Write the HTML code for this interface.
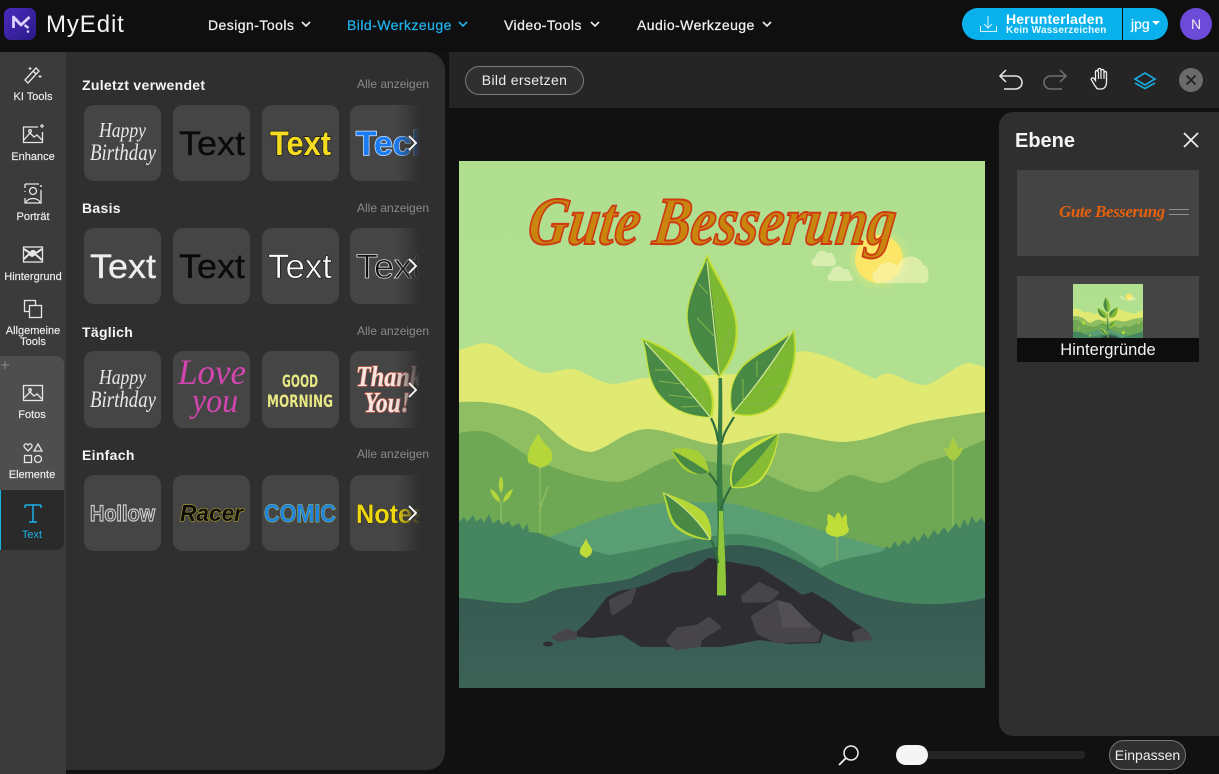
<!DOCTYPE html>
<html lang="de"><head><meta charset="utf-8"><title>MyEdit</title>
<style>
*{box-sizing:border-box}
html,body{margin:0;padding:0;width:1219px;height:774px;overflow:hidden;background:#111;font-family:"Liberation Sans",sans-serif;color:#fff}
.a{position:absolute}
.nav{position:absolute;top:16px;font-size:14px;line-height:18px;letter-spacing:.45px;color:#f0f0f0;font-weight:400;white-space:nowrap;-webkit-text-stroke:.25px #f0f0f0}
.side{position:absolute;width:66px;left:0;text-align:center;font-size:11px;line-height:11px;color:#eee;white-space:nowrap;-webkit-text-stroke:.15px #eee}
.h{position:absolute;left:82px;font-size:14px;line-height:16px;letter-spacing:.3px;font-weight:700;color:#f5f5f5;white-space:nowrap}
.all{position:absolute;left:357px;font-size:12px;line-height:14px;color:#8a8a8a;white-space:nowrap}
.tile{position:absolute;width:77px;height:76px;background:#454545;border-radius:10px}
.fade{position:absolute;left:396px;width:36px;height:78px;background:linear-gradient(90deg,rgba(47,47,47,0),#2f2f2f 68%)}
</style></head><body>

<div class="a" style="left:0;top:0;width:1219px;height:52px;background:#0f0f0f"></div>

<svg class="a" style="left:4px;top:8px" width="32" height="32" viewBox="0 0 32 32"><defs><linearGradient id="lg" x1="0" y1="0" x2="1" y2="1"><stop offset="0" stop-color="#4a2bc0"/><stop offset="1" stop-color="#2a1a86"/></linearGradient></defs><rect width="32" height="32" rx="7" fill="url(#lg)"/><path d="M9.500 20V9l7.500 8 8.500-8" fill="none" stroke="#dcd2ff" stroke-width="2.800" stroke-linejoin="round"/><path d="M20.500 17l4 3" stroke="#dcd2ff" stroke-width="2.400" fill="none"/><circle cx="24" cy="23.500" r="1.300" fill="#dcd2ff"/></svg>
<div class="a" style="left:46px;top:11px;font-size:24px;line-height:28px;letter-spacing:.9px;color:#f2f2f2">MyEdit</div>

<div class="nav" style="left:208px">Design-Tools</div>
<div class="nav" style="left:347px;color:#1fb0ea;-webkit-text-stroke:.25px #1fb0ea">Bild-Werkzeuge</div>
<div class="nav" style="left:504px">Video-Tools</div>
<div class="nav" style="left:637px">Audio-Werkzeuge</div>
<svg class="a" style="left:0;top:0" width="800" height="52" fill="none" stroke-width="1.600"><path d="M302 22l4 4 4-4" stroke="#eee"/><path d="M459 22l4 4 4-4" stroke="#1fb0ea"/><path d="M591 22l4 4 4-4" stroke="#eee"/><path d="M763 22l4 4 4-4" stroke="#eee"/></svg>

<div class="a" style="left:962px;top:8px;width:160px;height:32px;background:#08b1ec;border-radius:16px 0 0 16px"></div>
<div class="a" style="left:1123px;top:8px;width:45px;height:32px;background:#08b1ec;border-radius:0 16px 16px 0"></div>
<svg class="a" style="left:979px;top:15px" width="20" height="20" fill="none" stroke="#d6f3ff" stroke-width="1"><path d="M9 1v12M5 9l4 4 4-4M1.500 11v5.500h16V11"/></svg>
<div class="a" style="left:1006px;top:12px;font-size:14px;line-height:14px;font-weight:700;letter-spacing:.2px;color:#fff">Herunterladen</div>
<div class="a" style="left:1006px;top:25px;font-size:10px;line-height:12px;font-weight:700;letter-spacing:.24px;color:#e8f8ff">Kein Wasserzeichen</div>
<div class="a" style="left:1131px;top:16px;font-size:14px;line-height:16px;color:#fff;-webkit-text-stroke:.2px #fff">jpg</div>
<svg class="a" style="left:1152px;top:21px" width="9" height="6"><path d="M0 0h8L4 4z" fill="#fff"/></svg>
<div class="a" style="left:1180px;top:8px;width:32px;height:32px;border-radius:50%;background:#6b4bd8;text-align:center;font-size:14px;line-height:32px;color:#eee">N</div>

<div class="a" style="left:0;top:52px;width:66px;height:722px;background:#3b3b3b"></div>
<div class="a" style="left:66px;top:52px;width:379px;height:718px;background:#2f2f2f;border-radius:0 18px 18px 0"></div>
<div class="a" style="left:0;top:356px;width:64px;height:134px;background:#4e4e4e;border-radius:0 8px 0 0"></div>
<div class="a" style="left:0;top:490px;width:64px;height:60px;background:#2a2a2a;border-radius:0 0 8px 0;border-left:1px solid #1ab1e6"></div>
<svg class="a" style="left:0;top:358px" width="10" height="14" stroke="#8a8a8a" stroke-width="1"><path d="M1 7h8M5 3v8"/></svg>

<svg class="a" style="left:0;top:55px" width="66" height="500" fill="none" stroke="#e6e6e6" stroke-width="1.300">
<path d="M25 25l11-12 3 3-11 12zM33 16l3 3"/><path d="M30 12v3M28.500 13.500h3M40 20v3M38.500 21.500h3" stroke-width="1"/>
<path d="M38 72H23.500v15.500h19V77"/><path d="M24 85l6-7 4 4 3-2 5 5" /><circle cx="30" cy="76" r="1.300"/><path d="M40 71h4M42 69v4" stroke-width="1.200"/>
<path d="M25 129h14M25 129v4M25 137v-1M41 135v13H25v-5"/><circle cx="33" cy="136" r="3.500"/><path d="M26 148c1-6 13-6 14 0"/><circle cx="41" cy="131" r="1" fill="#e6e6e6" stroke="none"/>
<rect x="23.500" y="192" width="19" height="15"/><path d="M24 204l5-5 3 2 3-2 7 6M24 194l6 4M42 194l-6 4" stroke-width="2"/><circle cx="33" cy="198" r="2.500" fill="#e6e6e6"/>
<rect x="24.500" y="245.500" width="11" height="11"/><rect x="29.500" y="250.500" width="12" height="12" fill="#3b3b3b" />
</svg>
<svg class="a" style="left:0;top:380px" width="66" height="160" fill="none" stroke="#e6e6e6" stroke-width="1.300">
<rect x="23.500" y="5.500" width="19" height="15"/><path d="M24 18l6-6 4 4 3-2 5 5"/><circle cx="30" cy="10" r="1.300"/>
<path d="M28 71l-3.500-3.500c-2-3 2-5 3.500-2.500 1.500-2.500 5.500-.5 3.500 2.500z"/><path d="M38 64l4 7h-8z"/><rect x="24.500" y="75.500" width="7" height="7"/><circle cx="38" cy="79" r="3.500"/>
<path d="M25 125h16M33 125v17M29 142h8M25 128v-3M41 128v-3" stroke="#1ab1e6" stroke-width="1.500"/>
</svg>

<div class="side" style="top:92px">KI Tools</div>
<div class="side" style="top:152px">Enhance</div>
<div class="side" style="top:212px">Porträt</div>
<div class="side" style="top:272px">Hintergrund</div>
<div class="side" style="top:326px">Allgemeine</div>
<div class="side" style="top:337px">Tools</div>
<div class="side" style="top:410px;width:64px">Fotos</div>
<div class="side" style="top:470px;width:64px">Elemente</div>
<div class="side" style="top:530px;width:64px;color:#1ab1e6;-webkit-text-stroke:0">Text</div>

<div class="h" style="top:77px">Zuletzt verwendet</div><div class="all" style="top:77px">Alle anzeigen</div>
<div class="h" style="top:200px">Basis</div><div class="all" style="top:201px">Alle anzeigen</div>
<div class="h" style="top:324px">Täglich</div><div class="all" style="top:324px">Alle anzeigen</div>
<div class="h" style="top:447px">Einfach</div><div class="all" style="top:447px">Alle anzeigen</div>

<div class="tile" style="left:84px;top:105px"></div><div class="tile" style="left:173px;top:105px"></div><div class="tile" style="left:262px;top:105px"></div><div class="tile" style="left:350px;top:105px"></div>
<div class="tile" style="left:84px;top:228px"></div><div class="tile" style="left:173px;top:228px"></div><div class="tile" style="left:262px;top:228px"></div><div class="tile" style="left:350px;top:228px"></div>
<div class="tile" style="left:84px;top:351px;height:77px"></div><div class="tile" style="left:173px;top:351px;height:77px"></div><div class="tile" style="left:262px;top:351px;height:77px"></div><div class="tile" style="left:350px;top:351px;height:77px"></div>
<div class="tile" style="left:84px;top:475px"></div><div class="tile" style="left:173px;top:475px"></div><div class="tile" style="left:262px;top:475px"></div><div class="tile" style="left:350px;top:475px"></div>

<svg class="a" style="left:0;top:0" width="445" height="774" font-family="'Liberation Sans',sans-serif">
<defs><clipPath id="cl"><rect x="340" y="90" width="80" height="480"/></clipPath></defs>
<g font-family="'Liberation Serif',serif" font-style="italic" fill="#e8e8e8">
<text x="99" y="137" font-size="21" textLength="47" lengthAdjust="spacingAndGlyphs">Happy</text>
<text x="90" y="160" font-size="23" textLength="66" lengthAdjust="spacingAndGlyphs">Birthday</text>
<text x="99" y="384" font-size="21" textLength="47" lengthAdjust="spacingAndGlyphs">Happy</text>
<text x="90" y="407" font-size="23" textLength="66" lengthAdjust="spacingAndGlyphs">Birthday</text>
<text x="178" y="384" font-size="36" fill="#d445b0" textLength="68" lengthAdjust="spacingAndGlyphs">Love</text>
<text x="192" y="412" font-size="34" fill="#d445b0" textLength="46" lengthAdjust="spacingAndGlyphs">you</text>
</g>
<g font-size="34">
<text x="179" y="155" fill="#0a0a0a" stroke="#0a0a0a" stroke-width=".3" textLength="66" lengthAdjust="spacingAndGlyphs">Text</text>
<text x="270" y="155" fill="#f5dc20" stroke="#1a1a1a" stroke-width="1.500" font-weight="700" paint-order="stroke" textLength="61" lengthAdjust="spacingAndGlyphs">Text</text>
<text x="90" y="278" fill="#eee" stroke="#eee" stroke-width=".3" textLength="66" lengthAdjust="spacingAndGlyphs">Text</text>
<text x="179" y="278" fill="#0a0a0a" stroke="#0a0a0a" stroke-width=".3" textLength="66" lengthAdjust="spacingAndGlyphs">Text</text>
<text x="268" y="278" fill="#fff" stroke="#111" stroke-width=".6" textLength="64" lengthAdjust="spacingAndGlyphs">Text</text>
</g>
<g font-size="34" clip-path="url(#cl)">
<text x="356" y="155" fill="#1a7cf0" stroke="#cfe6ff" stroke-width="1.500" font-weight="700" paint-order="stroke" textLength="76" lengthAdjust="spacingAndGlyphs">Tech</text>
<text x="356" y="278" fill="#111" stroke="#ddd" stroke-width=".8" textLength="66" lengthAdjust="spacingAndGlyphs">Text</text>
<text x="356" y="386" font-family="'Liberation Serif',serif" font-style="italic" font-weight="700" font-size="29" fill="#f6e6e0" stroke="#c9604f" stroke-width="1.500" paint-order="stroke" textLength="66" lengthAdjust="spacingAndGlyphs">Thank</text>
<text x="364" y="412" font-family="'Liberation Serif',serif" font-style="italic" font-weight="700" font-size="28" fill="#f6e6e0" stroke="#c9604f" stroke-width="1.500" paint-order="stroke" textLength="46" lengthAdjust="spacingAndGlyphs">You!</text>
<text x="356" y="523" fill="#f0d810" stroke="#222" stroke-width="1" font-size="27" font-weight="700" paint-order="stroke" textLength="70" lengthAdjust="spacingAndGlyphs">Notes</text>
</g>
<g font-family="'DejaVu Sans',sans-serif" font-size="17" fill="#e8e884" font-weight="700">
<text x="282" y="387" textLength="36" lengthAdjust="spacingAndGlyphs">GOOD</text>
<text x="267" y="407" textLength="66" lengthAdjust="spacingAndGlyphs">MORNING</text>
</g>
<text x="90" y="521" font-size="22" font-weight="700" fill="#444" stroke="#cfcfcf" stroke-width="1.200" textLength="65" lengthAdjust="spacingAndGlyphs">Hollow</text>
<text x="180" y="521" font-size="23" font-weight="700" font-style="italic" fill="#0c0c0c" stroke="#c5b820" stroke-width="1" paint-order="stroke" textLength="63" lengthAdjust="spacingAndGlyphs">Racer</text>
<text x="264" y="522" font-size="25" font-weight="700" fill="#1b84e0" stroke="#c0d060" stroke-width=".8" paint-order="stroke" textLength="72" lengthAdjust="spacingAndGlyphs">COMIC</text>
</svg>

<div class="fade" style="top:104px"></div><div class="fade" style="top:227px"></div><div class="fade" style="top:350px;height:79px"></div><div class="fade" style="top:474px"></div>
<svg class="a" style="left:0;top:0" width="445" height="600" fill="none" stroke="#fff" stroke-width="1.800"><path d="M409 136l7 7-7 7M409 259l7 7-7 7M409 383l7 7-7 7M409 506l7 7-7 7"/></svg>

<div class="a" style="left:449px;top:52px;width:770px;height:56px;background:#252525"></div>
<div class="a" style="left:465px;top:66px;width:119px;height:29px;border:1px solid #7a7a7a;border-radius:15px;background:#303030;text-align:center;font-size:14px;line-height:27px;letter-spacing:.35px;color:#eee">Bild ersetzen</div>
<svg class="a" style="left:0;top:0" width="1219" height="108" fill="none">
<path d="M1006 70l-6 6 6 6M1000 76h15c4.500 0 7 3 7 6.500s-2.500 6.500-7 6.500h-11" stroke="#e8e8e8" stroke-width="1.500"/>
<path d="M1060 70l6 6-6 6M1066 76h-15c-4.500 0-7 3-7 6.500s2.500 6.500 7 6.500h11" stroke="#707070" stroke-width="1.500"/>
<path d="M1096 87c-2-2-3-5-4.500-7-1-1.500 1-3 2.500-1.500l1.500 2V72c0-2 2.500-2 2.500 0v-2c0-2 3-2 3 0v1c0-2 3-2 3 0v2c0-2 2.500-2 2.500 0v9c0 4-2 7-5.500 7h-2c-1.500 0-2.500-.5-3-2z" stroke="#f0f0f0" stroke-width="1.300"/><path d="M1098.500 72v7M1101 71v8M1104 73v6" stroke="#f0f0f0" stroke-width="1.200"/>
<path d="M1145 73l10 6-10 6-10-6zM1135 83l10 5.500 10-5.500" stroke="#1aa6dc" stroke-width="1.700"/>
<circle cx="1191" cy="80" r="12" fill="#6b6b6b"/><path d="M1186.500 75.500l9 9M1195.500 75.500l-9 9" stroke="#222" stroke-width="1.800"/>
</svg>

<svg class="a" style="left:459px;top:161px" width="526" height="527" viewBox="0 0 526 527">
<defs>
<linearGradient id="sk" x1="0" y1="0" x2="0" y2="1"><stop offset="0" stop-color="#afdf8f"/><stop offset="1" stop-color="#b2e191"/></linearGradient>
<linearGradient id="gnd" x1="0" y1="0" x2="0" y2="1"><stop offset="0" stop-color="#33574f"/><stop offset="1" stop-color="#3d6257"/></linearGradient>
<radialGradient id="sunglow"><stop offset="0" stop-color="#fff27a" stop-opacity=".5"/><stop offset=".75" stop-color="#f5ec78" stop-opacity=".3"/><stop offset="1" stop-color="#e8ea80" stop-opacity="0"/></radialGradient>
<g id="scene">
<rect width="526" height="527" fill="url(#sk)"/>
<circle cx="420" cy="98" r="33" fill="url(#sunglow)"/>
<circle cx="420" cy="98" r="24" fill="#fbe667"/>
<path d="M420 122c-7 0-10-10-2-13 2-8 14-10 20-4 5-12 22-13 26-1 8 0 6 18 2 18z" fill="#f7f6b8" fill-opacity=".62"/>
<path d="M357 105c-6 0-6-7-1-8 1-6 8-10 12-5 4-1 8 2 7 5 3 1 2 8-1 8zM374 120c-7 0-7-7-2-8 0-7 9-9 12-4 5-1 8 3 7 6 4 2 4 6 0 6z" fill="#d9edb0"/>
<path d="M0 189C10 186 20 182 28 182 45 184 60 208 85 212 95 212 105 207 115 208 128 212 140 222 155 223 168 222 180 216 200 216L300 212C320 200 335 190 345 190 370 192 400 212 417 218 422 212 428 212 436 214 445 218 455 224 467 224 485 218 495 204 510 202 516 203 522 205 526 206V300H0Z" fill="#e0ea72"/>
<path d="M0 241C30 239 60 245 80 258 95 270 110 290 132 291 150 288 165 268 190 268 215 270 235 282 260 284 285 282 305 272 328 272 350 275 368 281 385 281 410 280 430 270 450 264 475 258 505 254 526 251V400H0Z" fill="#8fbd62"/>
<path d="M0 272C8 270 15 270 22 270 40 273 52 285 67 294 95 308 130 321 160 321 180 318 200 298 220 297 245 298 270 305 295 308 320 318 340 332 358 331 372 326 380 315 392 314 405 316 415 323 425 322 440 318 455 304 470 300 490 296 510 285 526 279V450H0Z" fill="#6ea854"/>
<path d="M85 378C120 365 165 345 205 342 225 340 250 342 270 342 310 350 340 365 430 388L430 430H85Z" fill="#5a9e73"/>
<g fill="none" stroke="#8fbd62" stroke-width="1.300">
<path d="M81 300V376M82 345l7-20M42 340V368M494 298V370"/><path d="M127 396v24M378 375v32" stroke="#7fb060"/></g>
<path d="M0 361L5 356 8 361 14 354 17 361 22 357 25 362 30 353 34 363 40 358 43 364 50 360 53 366 60 362 64 369 68 362 70 371 80 372 110 384 150 394C190 388 240 374 277 373 320 374 340 395 362 407 372 400 395 396 417 392L424 390 428 385 431 388 436 380 439 386 445 379 449 384 455 375 459 381 465 372 469 378 475 369 479 374 485 366 489 372 497 362 501 368 505 358 509 365 513 355 517 362 522 357 526 362V460H0Z" fill="#458660"/>
<path d="M0 437C20 438 40 443 60 442 75 441 85 432 100 428 125 424 150 422 170 418 195 408 235 384 280 384 320 386 345 404 377 422 395 430 415 437 440 441 470 445 500 443 526 437V527H0Z" fill="url(#gnd)"/>
<g stroke-linejoin="round">
<path d="M119 472L132 460 149 438 160 432 177 429 195 423 213 414 233 411 250 399 277 404 300 408 322 422 343 436 353 433 370 443 387 458 405 470 411 477 393 479 378 476 363 470 360 480 330 481 300 477 263 484 240 484 207 484 183 484 163 472 133 475 120 474Z" fill="#2e2d31" stroke="#2e2d31" stroke-width="4"/>
<path d="M152 440L175 429 171 441 154 452ZM284 436L300 423 318 432 310 439 285 440ZM294 456L318 441 348 462 360 472 358 479 317 480 299 471ZM209 480L219 468 238 466 250 458 260 466 241 478 240 484 217 487ZM95 476L107 470 116 472 116 476 100 479ZM395 472L403 469 411 477 397 479Z" fill="#47454a" stroke="#47454a" stroke-width="4"/>
<path d="M320 441L331 444 351 465 325 465Z" fill="#525055" stroke="#525055" stroke-width="3"/>
</g>
<ellipse cx="89" cy="483" rx="5" ry="2.500" fill="#2e2d31"/>
<path d="M259.500 217C260 260 257 300 258 340 259 370 258 410 258 435L267 435C267 400 265 370 264 340 262 300 264 260 263 217Z" fill="#367c43"/>
<path d="M260 350C260 380 258 410 258 434L267 434C267 405 265 380 264 350Z" fill="#8fc63a"/>
<path d="M252 257C255 263 258 270 259 280M275 256C270 265 264 272 263 282M247 309C252 314 256 319 259 325M272 326C268 333 264 340 262 348M252 379C255 385 258 392 259 402" fill="none" stroke="#2f6b3c" stroke-width="2.200"/>
<!-- top leaf -->
<path d="M248 93C240 115 226 135 228 160 231 190 250 205 260 217 272 205 282 185 278 160 274 135 258 115 248 93Z" fill="#c3df35"/>
<path d="M248 97C241 116 227 136 229 160 232 189 250 204 260 215 260 170 255 135 248 97Z" fill="#478945"/>
<path d="M248 97C252 125 258 170 260 215 271 201 279 183 276 160 272 136 256 117 248 97Z" fill="#7db833"/>
<path d="M248 100C252 135 256 175 260 213" fill="none" stroke="#cfe58d" stroke-width="1.200"/>
<path d="M252 150l8-14M249 133l-9-10M255 175l-17-18M260 205l12-38" fill="none" stroke="#86b54a" stroke-width="1"/>
<!-- left leaf -->
<path d="M182 177C190 195 184 220 205 240 222 255 240 256 253 257 258 240 255 225 240 212 222 195 205 184 182 177Z" fill="#c3df35"/>
<path d="M184 179C191 197 186 221 206 239 222 254 240 255 251 256 232 232 208 205 184 179Z" fill="#478945"/>
<path d="M184 179C208 205 232 232 251 256 255 240 253 225 239 213 222 199 206 187 184 179Z" fill="#7db833"/>
<path d="M186 181C208 205 232 232 252 257" fill="none" stroke="#d4e89a" stroke-width="1.200"/>
<path d="M196 209h16M200 220l22 3M210 234l24 3M222 246l20-1M222 207l5 22M240 218l5 24" fill="none" stroke="#86b54a" stroke-width="1"/>
<!-- right leaf -->
<path d="M335 168C322 182 296 190 283 205 268 222 270 245 273 253 290 258 312 255 323 236 336 215 340 190 335 168Z" fill="#c3df35"/>
<path d="M334 171C319 185 298 192 284 206 270 222 271 240 274 252 295 228 316 200 334 171Z" fill="#478945"/>
<path d="M334 171C316 200 295 228 274 252 292 256 311 253 321 235 333 215 338 192 334 171Z" fill="#7db833"/>
<path d="M333 171C315 200 295 228 273 253" fill="none" stroke="#d4e89a" stroke-width="1.200"/>
<path d="M312 207l16-3M300 231l24-6M286 243h26M284 218v22M298 200v16" fill="none" stroke="#86b54a" stroke-width="1"/>
<!-- lower right leaf -->
<path d="M320 272C305 276 285 285 276 298 270 310 270 322 273 327 285 328 298 326 305 316 315 302 318 288 320 272Z" fill="#c9e23d"/>
<path d="M319 273C304 281 288 290 278 300 272 308 272 318 274 326 290 310 306 292 319 273Z" fill="#4f9343"/>
<path d="M319 273C306 292 290 310 274 326 286 327 297 323 304 314 313 301 317 288 319 273Z" fill="#86bd35"/>
<path d="M212 289C220 286 233 287 240 291 247 298 249 305 250 312 240 314 232 314 225 308 219 303 215 296 212 289Z" fill="#a6cf35"/>
<path d="M214 290C219 300 228 310 240 313 247 313 249 312 249 311 238 303 226 296 214 290Z" fill="#478945"/>
<path d="M203 331C215 335 235 342 245 351 252 360 253 370 252 379 240 379 225 375 215 365 207 355 208 342 203 331Z" fill="#b6d836"/>
<path d="M205 332C225 345 240 360 251 378 240 377 226 372 217 363 210 354 210 344 205 332Z" fill="#478945"/>
<path d="M205 332C225 345 240 360 251 378" fill="none" stroke="#d4e89a" stroke-width="1"/>
<!-- small plants -->
<path d="M79 272C76 280 71 283 70 290 68 294 68 300 70 302L75 304C78 305 80 307 81 307 84 306 88 305 91 302 94 299 94 294 92 289 89 285 84 282 79 272Z" fill="#b4d63a"/>
<path d="M42 315c-3 5-3 12 0 17 3-5 3-12 0-17zM31 328c2 7 5 12 10 13-1-7-5-11-10-13zM54 328c-2 7-5 12-10 13 1-7 5-11 10-13z" fill="#b4d63a"/>
<path d="M127 377c-1 5-5 8-6 12-1 3 1 5 3 6l3 2 3-2c2-1 3-3 3-6-1-4-5-7-6-12z" fill="#c0dc38"/>
<path d="M369 353c-1 4-1 6 0 9-1 3-3 5-2 7-1 3 3 6 11 7 8-1 12-4 12-8-1-2-2-4-2-7 0-3 0-6-1-8-2 1-3 3-4 5-1-3-2-5-4-7-1 2-3 4-3 7-1-2-4-4-7-5z" fill="#c0dc38"/>
<path d="M494 276c-2 5-4 8-4 12-2-1-4-1-5-1 1 5 5 11 9 13 4-2 9-8 10-13-2 0-4 0-5 1 0-4-3-7-5-12z" fill="#a8cc44"/>
</g>
</defs>
<use href="#scene"/>
<g transform="translate(67 83)"><text x="0" y="0" font-family="'Liberation Serif',serif" font-style="italic" font-weight="700" font-size="68" fill="#c8860f" stroke="#cf3a12" stroke-width="2" textLength="367" lengthAdjust="spacingAndGlyphs" transform="skewX(-8)">Gute Besserung</text></g>
</svg>

<div class="a" style="left:999px;top:112px;width:220px;height:624px;background:#2f2f2f;border-radius:14px 0 0 14px"></div>
<div class="a" style="left:1015px;top:129px;font-size:20px;line-height:24px;font-weight:700;color:#f5f5f5">Ebene</div>
<svg class="a" style="left:1183px;top:132px" width="16" height="16" stroke="#eee" stroke-width="1.700"><path d="M1 1l14 14M15 1L1 15"/></svg>
<div class="a" style="left:1017px;top:170px;width:182px;height:86px;background:#444"></div>
<div class="a" style="left:1059px;top:201px;font-family:'Liberation Serif',serif;font-style:italic;font-weight:700;font-size:17px;line-height:22px;color:#e6600c;letter-spacing:-.45px;white-space:nowrap">Gute Besserung</div>
<div class="a" style="left:1169px;top:209px;width:20px;height:6px;border-top:1.500px solid #8d8d8d;border-bottom:1.500px solid #8d8d8d"></div>
<div class="a" style="left:1017px;top:276px;width:182px;height:86px;background:#444"></div>
<svg class="a" style="left:1073px;top:284px" width="70" height="54" viewBox="0 0 526 406" preserveAspectRatio="xMidYMin slice"><use href="#scene"/></svg>
<div class="a" style="left:1017px;top:338px;width:182px;height:24px;background:#0d0d0d;text-align:center;font-size:16.500px;line-height:24px;color:#f2f2f2">Hintergründe</div>

<svg class="a" style="left:838px;top:744px" width="24" height="22" fill="none" stroke="#eee" stroke-width="1.500"><circle cx="13" cy="9" r="7"/><path d="M8 14l-7 7" stroke-width="1.800"/></svg>
<div class="a" style="left:897px;top:751px;width:188px;height:8px;background:#242424;border-radius:4px"></div>
<div class="a" style="left:896px;top:745px;width:32px;height:20px;background:#f5f5f5;border-radius:10px"></div>
<div class="a" style="left:1109px;top:740px;width:77px;height:30px;border:1px solid #777;border-radius:15px;background:#303030;text-align:center;font-size:14px;line-height:28px;color:#eee">Einpassen</div>

</body></html>
